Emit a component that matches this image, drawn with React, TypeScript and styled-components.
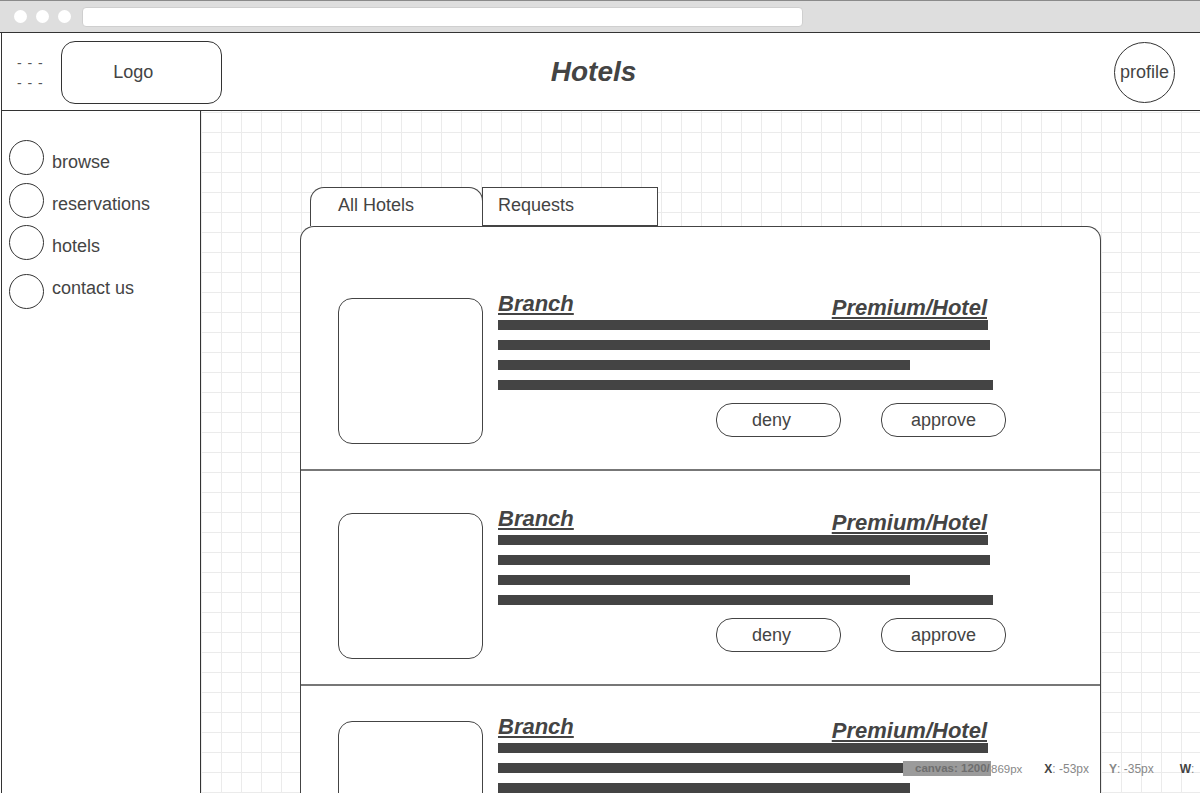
import React from "react";
import styled, { createGlobalStyle } from "styled-components";

const Global = createGlobalStyle`
  html, body { margin: 0; padding: 0; background: #fff; overflow: hidden; }
  body { font-family: "Liberation Sans", Arial, sans-serif; color: #444; }
  * { box-sizing: border-box; }
`;

const Window = styled.div`
  position: relative;
  width: 1200px;
  height: 793px;
  overflow: hidden;
  display: flex;
  flex-direction: column;
  background: #fff;
`;

const Chrome = styled.div`
  height: 33px;
  flex: none;
  background: #dedede;
  border-top: 1px solid #8a8a8a;
  border-bottom: 1px solid #333;
  display: flex;
  align-items: center;
  padding-left: 14px;
  gap: 9px;
`;

const Dot = styled.span`
  width: 13px;
  height: 13px;
  border-radius: 50%;
  background: #fff;
  flex: none;
`;

const UrlBar = styled.div`
  margin-left: 2px;
  width: 721px;
  height: 20px;
  background: #fff;
  border: 1px solid #cfcfcf;
  border-radius: 4px;
  margin-top: 1px;
`;

const Frame = styled.div`
  flex: 1;
  display: flex;
  flex-direction: column;
  margin-left: 1px;
  border-left: 1px solid #333;
  min-height: 0;
`;

const Header = styled.header`
  height: 78px;
  flex: none;
  border-bottom: 1px solid #333;
  display: flex;
  align-items: center;
`;

const Burger = styled.div`
  margin-left: 15px;
  display: flex;
  flex-direction: column;
  gap: 4px;
  font-size: 14px;
  line-height: 16px;
  color: #555;
  letter-spacing: 1px;
  white-space: pre;
  margin-top: 2px;
`;

const LogoBox = styled.div`
  margin-left: 17px;
  width: 161px;
  height: 63px;
  border: 1px solid #333;
  border-radius: 14px;
  display: flex;
  align-items: center;
  justify-content: center;
  padding-right: 16px;
  font-size: 18px;
  margin-top: 1px;
`;

const Title = styled.h1`
  margin: 0 0 0 329px;
  font-size: 28px;
  font-weight: bold;
  font-style: italic;
  color: #444;
  line-height: 32px;
`;

const Profile = styled.div`
  margin-left: auto;
  margin-right: 25px;
  width: 61px;
  height: 61px;
  border: 1px solid #333;
  border-radius: 50%;
  display: flex;
  align-items: center;
  justify-content: center;
  font-size: 18px;
  margin-top: 1px;
`;

const Body = styled.div`
  flex: 1;
  display: flex;
  min-height: 0;
`;

const Sidebar = styled.nav`
  width: 199px;
  flex: none;
  border-right: 1px solid #333;
  padding-top: 29px;
  padding-left: 7px;
  display: flex;
  flex-direction: column;
`;

const NavItem = styled.div<{ $gap: number }>`
  display: flex;
  align-items: center;
  margin-top: ${(p) => p.$gap}px;
  height: 35px;
`;

const Circle = styled.span`
  width: 35px;
  height: 35px;
  border: 1px solid #333;
  border-radius: 50%;
  flex: none;
`;

const NavLabel = styled.span<{ $shift: number }>`
  margin-left: 8px;
  font-size: 18px;
  line-height: 20px;
  padding-top: ${(p) => (p.$shift > 0 ? p.$shift * 2 : 0)}px;
  padding-bottom: ${(p) => (p.$shift < 0 ? -p.$shift * 2 : 0)}px;
`;

const Canvas = styled.main`
  flex: 1;
  min-width: 0;
  background-color: #fff;
  background-image: linear-gradient(to right, #ebebeb 1px, transparent 1px),
    linear-gradient(to bottom, #ebebeb 1px, transparent 1px);
  background-size: 20px 20px;
  background-position: 0 1px;
  padding: 76px 0 0 99px;
  display: flex;
  flex-direction: column;
`;

const Tabs = styled.div`
  display: flex;
  margin-left: 10px;
`;

const Tab = styled.div<{ $active?: boolean }>`
  height: 39px;
  font-size: 18px;
  line-height: 20px;
  background: #fff;
  border: 1px solid #444;
  border-bottom: ${(p) => (p.$active ? "none" : "1px solid #444")};
  border-radius: ${(p) => (p.$active ? "14px 14px 0 0" : "0")};
  width: ${(p) => (p.$active ? 173 : 176)}px;
  margin-left: ${(p) => (p.$active ? 0 : -1)}px;
  padding: 7px 0 0 ${(p) => (p.$active ? 27 : 15)}px;
`;

const Panel = styled.section`
  width: 801px;
  border: 1px solid #444;
  border-bottom: none;
  border-radius: 14px 14px 0 0;
  background: #fff;
  display: flex;
  flex-direction: column;
`;

const Card = styled.article<{ $top: number }>`
  display: flex;
  align-items: flex-start;
  padding: ${(p) => p.$top}px 0 25px 37px;
  border-bottom: 2px solid #777;
  flex: none;
`;

const Thumb = styled.div`
  width: 145px;
  height: 146px;
  border: 1px solid #444;
  border-radius: 14px;
  flex: none;
`;

const Info = styled.div`
  margin-left: 15px;
  margin-top: -6px;
  width: 508px;
  display: flex;
  flex-direction: column;
`;

const InfoHead = styled.div`
  width: 490px;
  height: 28px;
  display: flex;
  justify-content: space-between;
`;

const HeadText = styled.span<{ $low?: boolean }>`
  font-size: 22px;
  line-height: 24px;
  font-weight: bold;
  font-style: italic;
  text-decoration: underline;
  text-decoration-thickness: 2px;
  text-underline-offset: 2px;
  align-self: ${(p) => (p.$low ? "flex-end" : "flex-start")};
  margin-right: ${(p) => (p.$low ? 1 : 0)}px;
`;

const Lines = styled.div`
  display: flex;
  flex-direction: column;
  gap: 10px;
`;

const Line = styled.div<{ $w: number }>`
  height: 10px;
  width: ${(p) => p.$w}px;
  background: #444;
`;

const Actions = styled.div`
  margin-top: 13px;
  display: flex;
  justify-content: flex-end;
  gap: 40px;
`;

const Btn = styled.button<{ $inset?: number }>`
  width: 125px;
  height: 34px;
  border: 1px solid #444;
  border-radius: 16px;
  background: #fff;
  font-family: "Liberation Sans", Arial, sans-serif;
  font-size: 18px;
  color: #444;
  padding: 0 ${(p) => p.$inset ?? 0}px 0 0;
`;

const Status = styled.div`
  position: absolute;
  left: 903px;
  top: 761px;
  height: 15px;
  display: flex;
  align-items: center;
  font-family: "Liberation Sans", Arial, sans-serif;
  font-size: 12px;
  color: #888;
  white-space: nowrap;
`;

const StatusHighlight = styled.span`
  background: #9b9b9b;
  height: 15px;
  line-height: 15px;
  padding-left: 12px;
  color: #6e6e6e;
  font-size: 11.5px;
  font-weight: bold;
  width: 88px;
  overflow: hidden;
`;

const StatusTail = styled.span`
  font-size: 11.5px;
`;

const StatusItem = styled.span<{ $gap: number }>`
  margin-left: ${(p) => p.$gap}px;
`;

const Key = styled.b<{ $dark?: boolean }>`
  color: ${(p) => (p.$dark ? "#444" : "#888")};
`;

const nav = [
  { label: "browse", gap: 0, shift: 4 },
  { label: "reservations", gap: 8, shift: 3 },
  { label: "hotels", gap: 7, shift: 3 },
  { label: "contact us", gap: 14, shift: -4 },
];

const cards = [
  { top: 71, actions: true },
  { top: 42, actions: true },
  { top: 35, actions: false },
];

export default function App() {
  return (
    <Window>
      <Global />
      <Chrome>
        <Dot />
        <Dot />
        <Dot />
        <UrlBar />
      </Chrome>
      <Frame>
        <Header>
          <Burger>
            <span>- - -</span>
            <span>- - -</span>
          </Burger>
          <LogoBox>Logo</LogoBox>
          <Title>Hotels</Title>
          <Profile>profile</Profile>
        </Header>
        <Body>
          <Sidebar>
            {nav.map((n) => (
              <NavItem key={n.label} $gap={n.gap}>
                <Circle />
                <NavLabel $shift={n.shift}>{n.label}</NavLabel>
              </NavItem>
            ))}
          </Sidebar>
          <Canvas>
            <Tabs>
              <Tab $active>All Hotels</Tab>
              <Tab>Requests</Tab>
            </Tabs>
            <Panel>
              {cards.map((c, i) => (
                <Card key={i} $top={c.top}>
                  <Thumb />
                  <Info>
                    <InfoHead>
                      <HeadText>Branch</HeadText>
                      <HeadText $low>Premium/Hotel</HeadText>
                    </InfoHead>
                    <Lines>
                      <Line $w={490} />
                      <Line $w={492} />
                      <Line $w={412} />
                      <Line $w={495} />
                    </Lines>
                    {c.actions && (
                      <Actions>
                        <Btn $inset={14}>deny</Btn>
                        <Btn>approve</Btn>
                      </Actions>
                    )}
                  </Info>
                </Card>
              ))}
            </Panel>
          </Canvas>
        </Body>
      </Frame>
      <Status>
        <StatusHighlight>canvas: 1200/</StatusHighlight>
        <StatusTail>869px</StatusTail>
        <StatusItem $gap={22}>
          <Key $dark>X</Key>: -53px
        </StatusItem>
        <StatusItem $gap={20}>
          <Key>Y</Key>: -35px
        </StatusItem>
        <StatusItem $gap={26}>
          <Key $dark>W</Key>:
        </StatusItem>
      </Status>
    </Window>
  );
}
